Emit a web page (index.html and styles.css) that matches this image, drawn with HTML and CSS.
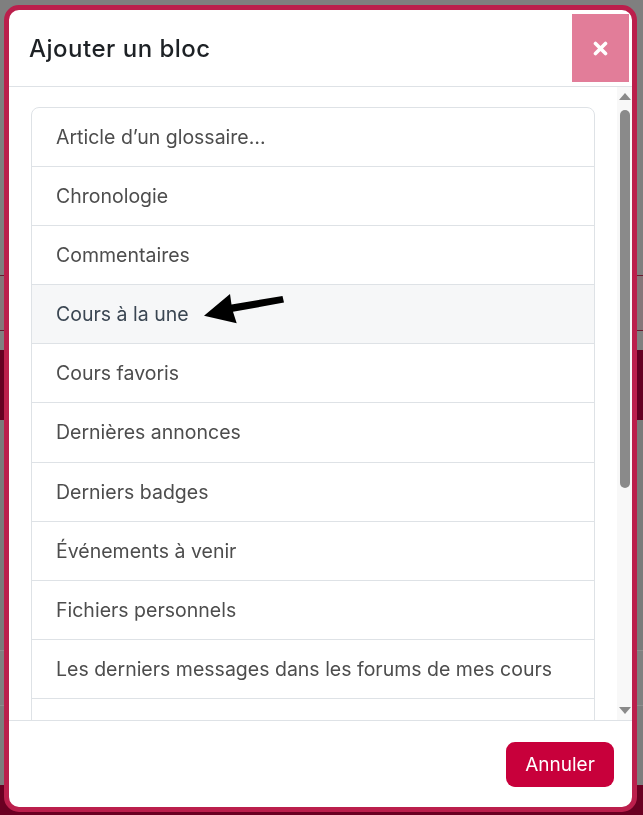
FILE: index.html
```html
<!DOCTYPE html>
<html lang="fr">
<head>
<meta charset="utf-8">
<title>Ajouter un bloc</title>
<link rel="stylesheet" href="styles.css">
</head>
<body>
<div class="page">
  <div class="band band-top"></div>
  <div class="band band-line"></div>
  <div class="band band-rose"></div>
  <div class="band band-line"></div>
  <div class="band band-gray"></div>
  <div class="band band-dark"></div>
  <div class="band band-mid"></div>
  <div class="band band-line2"></div>
  <div class="band band-gray2"></div>
  <div class="band band-line2"></div>
  <div class="band band-gray3"></div>
  <div class="band band-bottom"></div>
</div>

<div class="modal" role="dialog" aria-labelledby="modal-title">
  <div class="modal-header">
    <h5 class="modal-title" id="modal-title">Ajouter un bloc</h5>
    <button class="close-btn" aria-label="Fermer">
      <svg width="15" height="15" viewBox="0 0 15 15"><path d="M2.5 2.5 L12.5 12.5 M12.5 2.5 L2.5 12.5" stroke="#fff" stroke-width="3.6" stroke-linecap="round" fill="none"/></svg>
    </button>
  </div>
  <div class="modal-body">
    <div class="scroll-area">
      <div class="list-group">
        <a class="list-item">Article d’un glossaire…</a>
        <a class="list-item">Chronologie</a>
        <a class="list-item">Commentaires</a>
        <a class="list-item active">Cours à la une
          <svg class="arrow" width="90" height="40" viewBox="0 0 90 40"><path d="M4 26.7 L30 5 L31.5 15.5 L82.5 7 L84 13.5 L33 22.8 L36.7 34.3 Z" fill="#000"/></svg>
        </a>
        <a class="list-item">Cours favoris</a>
        <a class="list-item">Dernières annonces</a>
        <a class="list-item">Derniers badges</a>
        <a class="list-item">Événements à venir</a>
        <a class="list-item">Fichiers personnels</a>
        <a class="list-item">Les derniers messages dans les forums de mes cours</a>
        <a class="list-item">Liens de section</a>
      </div>
    </div>
    <div class="scrollbar">
      <span class="sb-up"></span>
      <div class="sb-track"><span class="sb-thumb"></span></div>
      <span class="sb-down"></span>
    </div>
  </div>
  <div class="modal-footer">
    <button class="btn-cancel">Annuler</button>
  </div>
</div>
</body>
</html>
```

FILE: styles.css
```css
* { box-sizing: border-box; }
html, body { margin: 0; padding: 0; }
body {
  width: 643px;
  height: 815px;
  overflow: hidden;
  font-family: Inter, "Open Sans", "Liberation Sans", sans-serif;
  background: #808080;
}

/* dimmed page behind the dialog */
.page { display: flex; flex-direction: column; height: 815px; }
.band { flex: none; }
.band-top { height: 275px; background: #7f7f7f; }
.band-line { height: 1px; background: #6a1a30; }
.band-rose { height: 54px; background: #857679; }
.band-gray { height: 19px; background: #808080; }
.band-dark { height: 70px; background: #650022; }
.band-mid { height: 230px; background: #7a7a7a; }
.band-line2 { height: 1px; background: #8e8e8e; }
.band-gray2 { height: 54px; background: #808080; }
.band-gray3 { height: 79px; background: #7d7d7d; }
.band-bottom { height: 30px; background: #6a0022; }

/* dialog */
.modal {
  position: fixed;
  left: 4px;
  top: 5px;
  width: 633px;
  height: 807px;
  background: #fff;
  border: 5px solid #bb1f4c;
  border-radius: 15px;
  display: flex;
  flex-direction: column;
  overflow: hidden;
}

.modal-header {
  flex: none;
  height: 77px;
  display: flex;
  align-items: stretch;
  justify-content: space-between;
  padding: 4px 3px 4px 20px;
  border-bottom: 1px solid #dee2e6;
}
.modal-title {
  margin: 0;
  align-self: center;
  font-size: 24px;
  font-weight: 500;
  color: #1d2125;
  letter-spacing: 0.5px;
}
.close-btn {
  width: 57px;
  border: 0;
  padding: 0;
  background: #e27d99;
  display: flex;
  align-items: center;
  justify-content: center;
}

.modal-body {
  flex: 1;
  min-height: 0;
  display: flex;
}
.scroll-area {
  flex: 1;
  overflow: hidden;
  padding: 20px 22px 0 22px;
}
.list-group {
  border: 1px solid #dee2e6;
  border-radius: 8px;
  display: flex;
  flex-direction: column;
}
.list-item {
  position: relative;
  display: block;
  flex: none;
  height: 59.12px;
  padding: 0 24px;
  line-height: 58px;
  border-top: 1px solid #dee2e6;
  font-size: 19.5px;
  color: #4d4d4d;
  white-space: nowrap;
}
.list-item:first-child { border-top: 0; height: 58px; }
.list-item.active { background: #f6f7f8; color: #3a4652; }
.arrow { position: absolute; left: 168px; top: 4px; }

/* scrollbar drawn as decoration */
.scrollbar {
  flex: none;
  width: 15px;
  background: #f8f8f8;
  display: flex;
  flex-direction: column;
  align-items: center;
  padding: 6px 0 6px;
}
.sb-up, .sb-down {
  width: 0; height: 0;
  border-left: 6px solid transparent;
  border-right: 6px solid transparent;
}
.sb-up { border-bottom: 7px solid #8a8a8a; }
.sb-down { border-top: 7px solid #8a8a8a; }
.sb-track { flex: 1; width: 100%; display: flex; justify-content: center; padding-top: 10px; }
.sb-thumb { width: 10px; height: 378px; border-radius: 5px; background: #8a8a8a; }

.modal-footer {
  flex: none;
  height: 87px;
  border-top: 1px solid #dee2e6;
  display: flex;
  justify-content: flex-end;
  align-items: flex-start;
  padding: 21px 18px 0 0;
}
.btn-cancel {
  width: 108px;
  height: 45px;
  border: 0;
  border-radius: 9px;
  background: #c8003b;
  color: #fff;
  font-family: Inter, "Open Sans", "Liberation Sans", sans-serif;
  font-size: 19px;
}
```
